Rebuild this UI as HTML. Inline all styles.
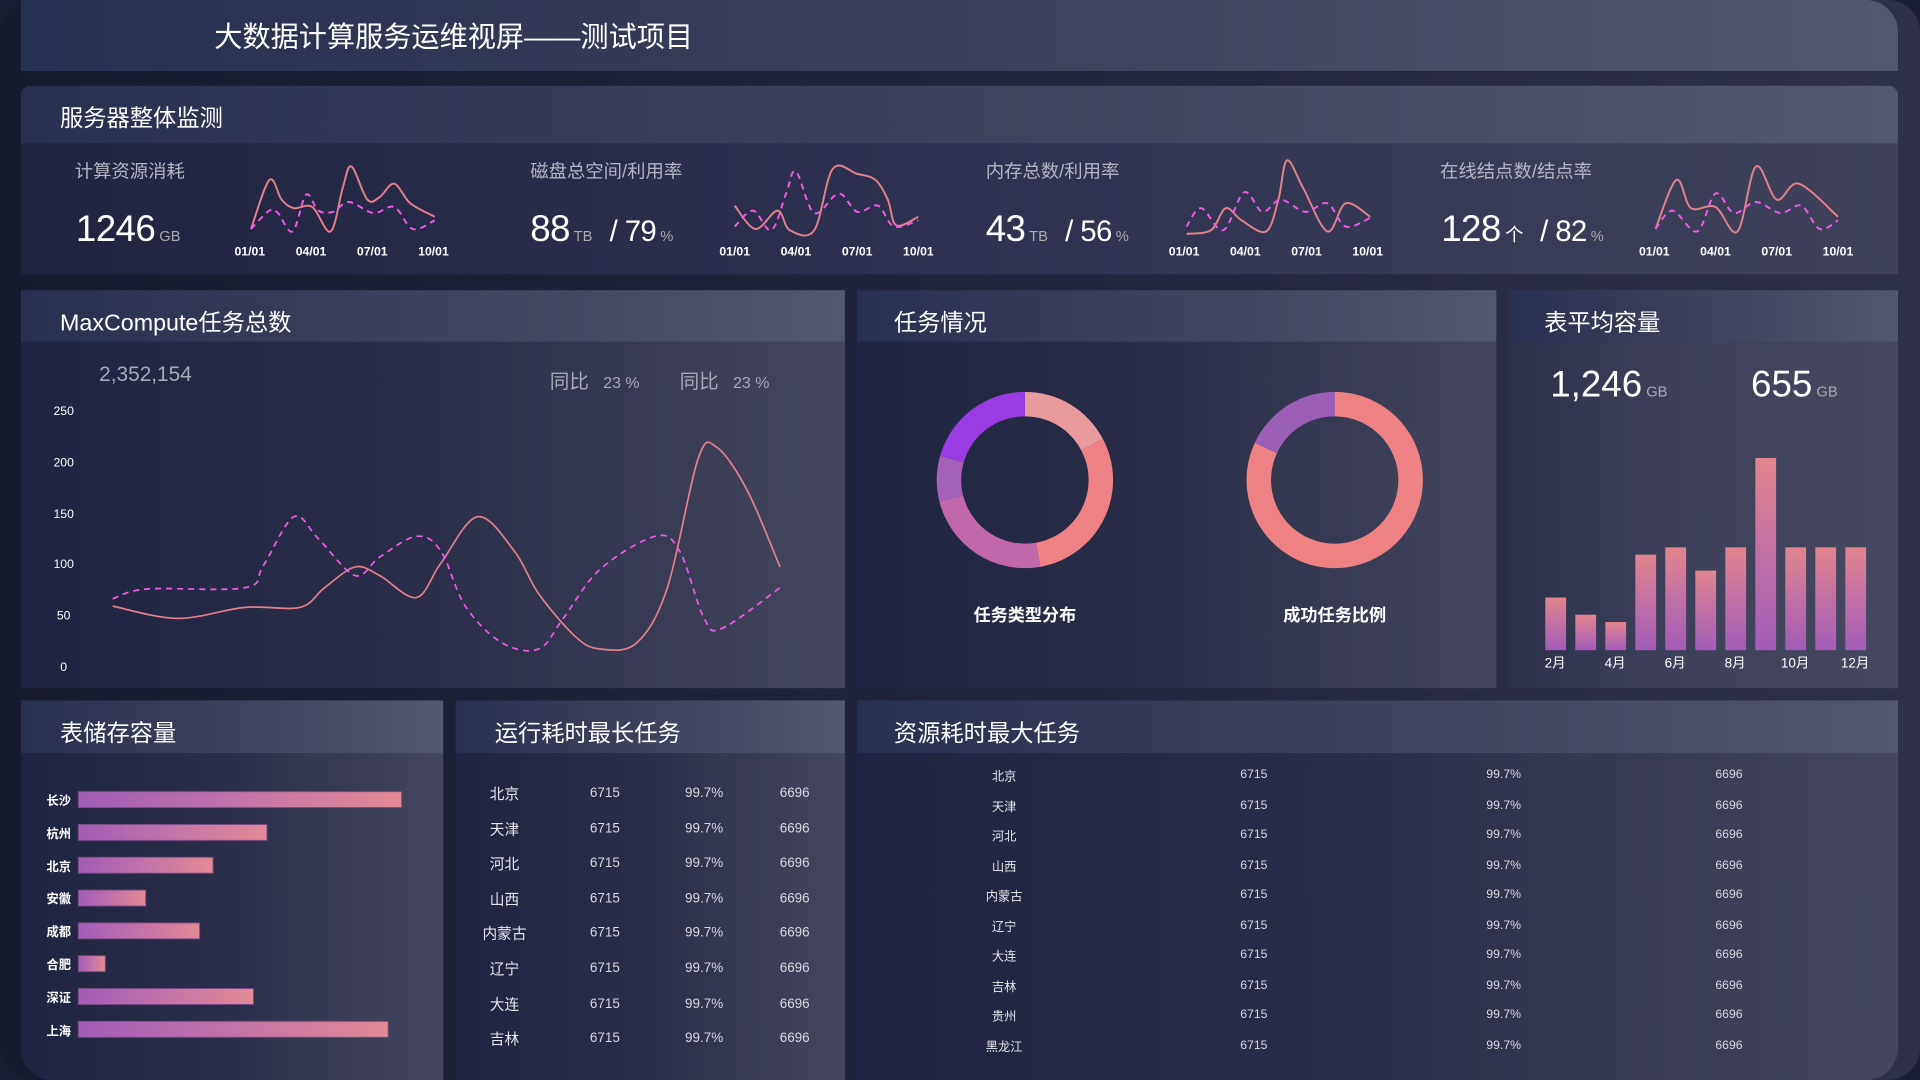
<!DOCTYPE html>
<html><head><meta charset="utf-8">
<style>
*{margin:0;padding:0;box-sizing:border-box}
html,body{width:1920px;height:1080px;overflow:hidden;background:#1a1e33}
#s{position:absolute;left:0;top:0;width:1568px;height:882px;transform:scale(1.22449);transform-origin:0 0;font-family:"Liberation Sans","Noto Sans CJK SC",sans-serif;color:#fff;background:linear-gradient(90deg,#171b2e,#23273e 60%,#2d3046);border-radius:26px}
.a{position:absolute}
.p{position:absolute;background:linear-gradient(90deg,#1f2440,#2a2e48 50%,#44475d);overflow:hidden}
.h{position:absolute;left:0;right:0;top:0;background:linear-gradient(90deg,#283050,#3a3e58 40%,#525870)}
.t{position:absolute;font-size:19px;white-space:nowrap}
.lb{font-size:15px;color:#b3b6c2;white-space:nowrap}
.big{font-size:30px;white-space:nowrap;letter-spacing:-0.5px}
.u{font-size:12px;color:#aaa;letter-spacing:0}
.c{transform:translate(-50%,-50%);white-space:nowrap}
</style></head><body>
<div id="s">
<div class="a" style="left:17px;top:0;width:1533px;height:58px;border-radius:0 26px 0 0;background:linear-gradient(90deg,#263050,#3a3e58 45%,#535870)"></div>
<div class="a" style="left:175px;top:11px;font-size:23px;white-space:nowrap">大数据计算服务运维视屏——测试项目</div>

<div class="p" style="left:17px;top:70px;width:1533px;height:154px;border-radius:8px 8px 0 0;background:linear-gradient(90deg,#20243f,#2e3250 50%,#3f4259)"><div class="h" style="height:47px"></div><div class="t" style="left:32px;top:12px">服务器整体监测</div></div>
<div class="a lb" style="left:61px;top:129px">计算资源消耗</div>
<div class="a lb" style="left:433px;top:129px">磁盘总空间/利用率</div>
<div class="a lb" style="left:805px;top:129px">内存总数/利用率</div>
<div class="a lb" style="left:1176px;top:129px">在线结点数/结点率</div>
<div class="a big" style="left:62px;top:171px">1246<span class="u"> GB</span></div>
<div class="a big" style="left:433px;top:171px">88<span class="u"> TB</span> <span style="font-size:24px">&nbsp;/ 79</span><span class="u"> %</span></div>
<div class="a big" style="left:805px;top:171px">43<span class="u"> TB</span> <span style="font-size:24px">&nbsp;/ 56</span><span class="u"> %</span></div>
<div class="a big" style="left:1177px;top:171px">128<span style="font-size:15px"> 个</span> <span style="font-size:24px">&nbsp;/ 82</span><span class="u"> %</span></div>

<div class="p" style="left:17px;top:237px;width:673px;height:325px"><div class="h" style="height:42px"></div><div class="t" style="left:32px;top:12px">MaxCompute任务总数</div></div>
<div class="p" style="left:700px;top:237px;width:522px;height:325px"><div class="h" style="height:42px"></div><div class="t" style="left:30px;top:12px">任务情况</div></div>
<div class="p" style="left:1232px;top:237px;width:318px;height:325px;background:linear-gradient(90deg,#2c3049,#3d4058 40%,#45485e)"><div class="h" style="height:42px"></div><div class="t" style="left:29px;top:12px">表平均容量</div></div>

<div class="a" style="left:81px;top:296px;font-size:17px;color:#a6a9b6">2,352,154</div>
<div class="a" style="left:449px;top:298px;font-size:16px;color:#a6a9b6;white-space:nowrap">同比 <span style="font-size:13px">&nbsp;&nbsp;23 %</span></div>
<div class="a" style="left:555px;top:298px;font-size:16px;color:#a6a9b6;white-space:nowrap">同比 <span style="font-size:13px">&nbsp;&nbsp;23 %</span></div>
<div class="a" style="left:38px;top:331px;width:28px;font-size:10px;text-align:center;line-height:12px">250</div>
<div class="a" style="left:38px;top:373px;width:28px;font-size:10px;text-align:center;line-height:12px">200</div>
<div class="a" style="left:38px;top:415px;width:28px;font-size:10px;text-align:center;line-height:12px">150</div>
<div class="a" style="left:38px;top:456px;width:28px;font-size:10px;text-align:center;line-height:12px">100</div>
<div class="a" style="left:38px;top:498px;width:28px;font-size:10px;text-align:center;line-height:12px">50</div>
<div class="a" style="left:38px;top:540px;width:28px;font-size:10px;text-align:center;line-height:12px">0</div>

<div class="a c" style="left:837px;top:502px;font-size:14px;font-weight:bold">任务类型分布</div>
<div class="a c" style="left:1090px;top:502px;font-size:14px;font-weight:bold">成功任务比例</div>

<div class="a" style="left:1266px;top:298px;font-size:30px;white-space:nowrap">1,246<span class="u"> GB</span></div>
<div class="a" style="left:1430px;top:298px;font-size:30px;white-space:nowrap">655<span class="u"> GB</span></div>

<div class="p" style="left:17px;top:572px;width:345px;height:310px;border-radius:0 0 0 26px"><div class="h" style="height:43px"></div><div class="t" style="left:32px;top:12px">表储存容量</div></div>
<div class="p" style="left:372px;top:572px;width:318px;height:310px"><div class="h" style="height:43px"></div><div class="t" style="left:32px;top:12px">运行耗时最长任务</div></div>
<div class="p" style="left:700px;top:572px;width:850px;height:310px;border-radius:0 0 26px 0"><div class="h" style="height:43px"></div><div class="t" style="left:30px;top:12px">资源耗时最大任务</div></div>

<div id="tx"></div>
<svg class="a" style="left:0;top:0" width="1568" height="882" viewBox="0 0 1568 882">
<defs>
<linearGradient id="bg" x1="0" y1="0" x2="0" y2="1"><stop offset="0" stop-color="#e2858f"/><stop offset="1" stop-color="#a25cb8"/></linearGradient>
<linearGradient id="hg" x1="0" y1="0" x2="1" y2="0"><stop offset="0" stop-color="#a25cb8"/><stop offset="1" stop-color="#e48a96"/></linearGradient>
</defs>
<g id="g"></g>
</svg>
</div>
<script>
var g=document.getElementById('g'),tx=document.getElementById('tx'),NS='http://www.w3.org/2000/svg';
function cr(p){var d='M'+p[0][0]+','+p[0][1];for(var i=0;i<p.length-1;i++){var p0=p[i-1]||p[i],p1=p[i],p2=p[i+1],p3=p[i+2]||p2;d+=' C'+(p1[0]+(p2[0]-p0[0])/6)+','+(p1[1]+(p2[1]-p0[1])/6)+' '+(p2[0]-(p3[0]-p1[0])/6)+','+(p2[1]-(p3[1]-p1[1])/6)+' '+p2[0]+','+p2[1];}return d;}
function el(n,a){var e=document.createElementNS(NS,n);for(var k in a)e.setAttribute(k,a[k]);g.appendChild(e);return e;}
function line(p,dash,w){el('path',{d:cr(p),fill:'none',stroke:dash?'#f05ae8':'#e2808c','stroke-width':w||1.5,'stroke-dasharray':dash?'5,4':'none'});}
function txt(x,y,s,st){var d=document.createElement('div');d.className='a';d.style.cssText='left:'+x+'px;top:'+y+'px;transform:translate(-50%,-50%);white-space:nowrap;'+st;d.textContent=s;tx.appendChild(d);}
var S=[[[[205,187],[220,147],[230,163],[240,170],[255,169],[270,189],[280,153],[287,136],[300,163],[310,161],[322,150],[335,166],[355,177]],[[205,187],[220,172],[227,174],[239,189],[250,159],[260,172],[272,173],[285,165],[305,174],[322,169],[337,187],[355,180]]],
[[[600,168],[617,187],[635,172],[645,188],[665,188],[680,138],[700,142],[715,147],[725,163],[732,184],[750,177]],[[600,185],[615,172],[630,188],[642,158],[650,140],[665,174],[685,158],[700,173],[717,168],[730,185],[750,180]]],
[[[969,191],[989,188],[1001,170],[1014,180],[1034,189],[1044,163],[1051,131],[1064,153],[1084,189],[1099,166],[1119,177]],[[969,185],[981,170],[999,188],[1016,157],[1031,173],[1046,163],[1066,173],[1084,166],[1099,185],[1119,178]]],
[[[1352,187],[1369,147],[1381,170],[1401,169],[1419,189],[1434,136],[1451,163],[1469,150],[1501,177]],[[1352,187],[1366,172],[1386,189],[1401,158],[1416,174],[1434,165],[1454,174],[1471,168],[1486,187],[1501,180]]]];
var AX=[204,600,967,1351];
S.forEach(function(s,i){line(s[0],0,1.6);line(s[1],1,1.6);['01/01','04/01','07/01','10/01'].forEach(function(l,j){txt(AX[i]+j*50,206,l,'font-size:10px;font-weight:bold');});});
line([[92,495],[145,505],[200,496],[245,496],[265,480],[290,463],[310,470],[340,488],[360,460],[390,422],[420,450],[440,485],[470,520],[490,530],[520,525],[545,480],[570,375],[585,365],[610,400],[637,463]],0,1.4);
line([[92,489],[120,481],[200,480],[215,462],[240,422],[260,440],[290,470],[310,455],[340,438],[360,450],[380,495],[410,525],[440,530],[460,505],[490,465],[535,438],[555,450],[575,505],[590,513],[637,480]],1,1.4);
function arc(cx,cy,r0,r1,a0,a1,c){function pt(r,a){a=(a-90)*Math.PI/180;return [cx+r*Math.cos(a),cy+r*Math.sin(a)];}var l=(a1-a0)>180?1:0,p1=pt(r1,a0),p2=pt(r1,a1),p3=pt(r0,a1),p4=pt(r0,a0);el('path',{d:'M'+p1+' A'+r1+','+r1+' 0 '+l+' 1 '+p2+' L'+p3+' A'+r0+','+r0+' 0 '+l+' 0 '+p4+'Z',fill:c});}
arc(837,392,52,72,0,62,'#e89a9c');arc(837,392,52,72,62,170,'#ef8284');arc(837,392,52,72,170,256,'#c068aa');arc(837,392,52,72,256,286,'#a462b8');arc(837,392,52,72,286,360,'#9b3be2');
arc(1090,392,52,72,0,295,'#ef8284');arc(1090,392,52,72,295,360,'#9b5fb8');
var tops=[488,502,508,453,447,466,447,374,447,447,447];
tops.forEach(function(t,i){el('rect',{x:1262+i*24.5,y:t,width:17,height:531-t,fill:'url(#bg)'});});
['2月','4月','6月','8月','10月','12月'].forEach(function(l,j){txt(1270+j*49,541,l,'font-size:11px');});
var hb=[['长沙',328],['杭州',218],['北京',174],['安徽',119],['成都',163],['合肥',86],['深证',207],['上海',317]];
hb.forEach(function(b,i){var y=653+i*26.8;el('rect',{x:64,y:y-6.5,width:b[1]-64,height:13,fill:'url(#hg)',stroke:'#7a4c86','stroke-width':0.8});txt(48,y,b[0],'font-size:10px;font-weight:bold');});
['北京','天津','河北','山西','内蒙古','辽宁','大连','吉林'].forEach(function(n,i){var y=648+i*28.6;txt(412,y,n,'font-size:12px;color:#e6e6ea');txt(494,y,'6715','font-size:11px;color:#d8d8de');txt(575,y,'99.7%','font-size:11px;color:#d8d8de');txt(649,y,'6696','font-size:11px;color:#d8d8de');});
['北京','天津','河北','山西','内蒙古','辽宁','大连','吉林','贵州','黑龙江'].forEach(function(n,i){var y=633+i*24.5;txt(820,y,n,'font-size:10px;color:#e6e6ea');txt(1024,y,'6715','font-size:10px;color:#d8d8de');txt(1228,y,'99.7%','font-size:10px;color:#d8d8de');txt(1412,y,'6696','font-size:10px;color:#d8d8de');});
</script>
</body></html>
